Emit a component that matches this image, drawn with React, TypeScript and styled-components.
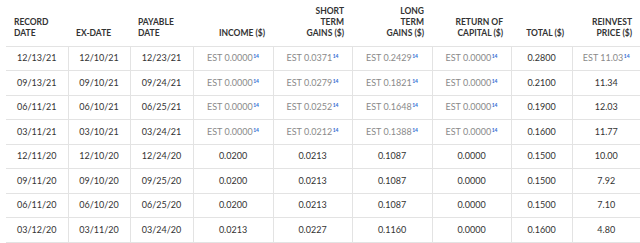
import React from "react";
import styled, { createGlobalStyle } from "styled-components";

const Global = createGlobalStyle`
  html, body { margin: 0; padding: 0; background: #fff; }
  body { font-family: Lato, "Open Sans", "Liberation Sans", sans-serif; }
`;

const Wrap = styled.div`
  padding-left: 6px;
  width: 634px;
`;

const Table = styled.table`
  width: 634px;
  table-layout: fixed;
  border-collapse: collapse;
  border-spacing: 0;
`;

const Th = styled.th<{ $left?: boolean }>`
  box-sizing: border-box;
  height: 46px;
  padding: 0 8px 7px 8px;
  vertical-align: bottom;
  text-align: ${(p) => (p.$left ? "left" : "right")};
  font-size: 8.5px;
  line-height: 11px;
  font-weight: 700;
  color: #333;
  text-transform: uppercase;
  border-bottom: 1px solid #e3e3e3;
`;

const Tr = styled.tr``;

const Td = styled.td`
  box-sizing: border-box;
  height: 24.5px;
  padding: 0;
  text-align: center;
  vertical-align: middle;
  font-size: 9px;
  line-height: 12px;
  color: #333;
  border-bottom: 1px solid #e3e3e3;
  border-left: 1px solid #e3e3e3;
  white-space: nowrap;
  &:first-child { border-left: none; }
`;

const Est = styled.span`
  color: #8a8a8a;
`;

const Note = styled.sup`
  color: #2a6ad3;
  font-size: 5px;
  font-weight: 700;
  vertical-align: 3px;
  line-height: 0;
  margin-left: 0.5px;
`;

const widths = [62, 62, 63, 80, 79, 80, 79, 61, 68];

const headers: { label: React.ReactNode; left?: boolean }[] = [
  { label: <>Record<br />Date</>, left: true },
  { label: "Ex-Date", left: true },
  { label: <>Payable<br />Date</>, left: true },
  { label: "Income ($)" },
  { label: <>Short<br />Term<br />Gains ($)</> },
  { label: <>Long<br />Term<br />Gains ($)</> },
  { label: <>Return of<br />Capital ($)</> },
  { label: "Total ($)" },
  { label: <>Reinvest<br />Price ($)</> },
];

type Cell = string | { est: string };

const rows: Cell[][] = [
  ["12/13/21", "12/10/21", "12/23/21", { est: "0.0000" }, { est: "0.0371" }, { est: "0.2429" }, { est: "0.0000" }, "0.2800", { est: "11.03" }],
  ["09/13/21", "09/10/21", "09/24/21", { est: "0.0000" }, { est: "0.0279" }, { est: "0.1821" }, { est: "0.0000" }, "0.2100", "11.34"],
  ["06/11/21", "06/10/21", "06/25/21", { est: "0.0000" }, { est: "0.0252" }, { est: "0.1648" }, { est: "0.0000" }, "0.1900", "12.03"],
  ["03/11/21", "03/10/21", "03/24/21", { est: "0.0000" }, { est: "0.0212" }, { est: "0.1388" }, { est: "0.0000" }, "0.1600", "11.77"],
  ["12/11/20", "12/10/20", "12/24/20", "0.0200", "0.0213", "0.1087", "0.0000", "0.1500", "10.00"],
  ["09/11/20", "09/10/20", "09/25/20", "0.0200", "0.0213", "0.1087", "0.0000", "0.1500", "7.92"],
  ["06/11/20", "06/10/20", "06/25/20", "0.0200", "0.0213", "0.1087", "0.0000", "0.1500", "7.10"],
  ["03/12/20", "03/11/20", "03/24/20", "0.0213", "0.0227", "0.1160", "0.0000", "0.1600", "4.80"],
];

export default function App() {
  return (
    <>
      <Global />
      <Wrap>
        <Table>
          <colgroup>
            {widths.map((w, i) => (
              <col key={i} style={{ width: w }} />
            ))}
          </colgroup>
          <thead>
            <tr>
              {headers.map((h, i) => (
                <Th key={i} $left={h.left}>
                  {h.label}
                </Th>
              ))}
            </tr>
          </thead>
          <tbody>
            {rows.map((r, i) => (
              <Tr key={i}>
                {r.map((c, j) => (
                  <Td key={j}>
                    {typeof c === "string" ? (
                      c
                    ) : (
                      <Est>
                        EST {c.est}
                        <Note>14</Note>
                      </Est>
                    )}
                  </Td>
                ))}
              </Tr>
            ))}
          </tbody>
        </Table>
      </Wrap>
    </>
  );
}
